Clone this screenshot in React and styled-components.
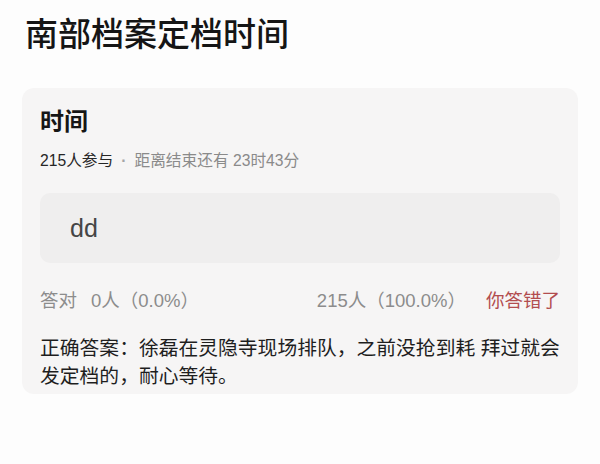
import styled, { createGlobalStyle } from "styled-components";

const GlobalStyle = createGlobalStyle`
  html, body {
    margin: 0;
    padding: 0;
    background: #fdfdfd;
  }
  body {
    font-family: "Liberation Sans", "Noto Sans CJK SC", sans-serif;
    color: #1c1c1c;
  }
`;

const Page = styled.div`
  width: 600px;
  height: 464px;
  padding: 11px 22px 0 22px;
  box-sizing: border-box;
`;

const Title = styled.h1`
  margin: 0 0 0 3px;
  font-family: "Noto Sans CJK SC", sans-serif;
  font-size: 33px;
  font-weight: 500;
  line-height: 42px;
  color: #151515;
`;

const Card = styled.section`
  margin-top: 35px;
  background: #f6f5f5;
  border-radius: 12px;
  padding: 15px 18px 4px 18px;
  display: flex;
  flex-direction: column;
`;

const CardTitle = styled.h2`
  margin: 0;
  font-family: "Noto Sans CJK SC", sans-serif;
  font-size: 24px;
  font-weight: 700;
  line-height: 34px;
  color: #161616;
`;

const Meta = styled.div`
  margin-top: 14px;
  font-size: 15.7px;
  line-height: 20px;
  color: #8a8a8a;
`;

const Strong = styled.span`
  color: #262626;
`;

const Dot = styled.span`
  margin: 0 8px;
  font-weight: 700;
  color: #a5a5a5;
`;

const Option = styled.div`
  margin-top: 22px;
  background: #efeeee;
  border-radius: 10px;
  height: 70px;
  display: flex;
  align-items: center;
  padding-left: 30px;
  font-size: 25px;
  color: #454545;
`;

const StatRow = styled.div`
  margin-top: 27px;
  display: flex;
  align-items: center;
  font-size: 18.5px;
  line-height: 22px;
  color: #8c8c8c;
`;

const Label = styled.span`
  margin-right: 14px;
`;

const Grow = styled.span`
  flex: 1;
`;

const Wrong = styled.span`
  margin-left: 20px;
  color: #b24d4f;
`;

const Answer = styled.p`
  margin: 22px 0 0 0;
  font-size: 19.8px;
  line-height: 28px;
  color: #1e1e1e;
`;

export default function App() {
  return (
    <>
      <GlobalStyle />
      <Page>
        <Title>南部档案定档时间</Title>
        <Card>
          <CardTitle>时间</CardTitle>
          <Meta>
            <Strong>215人参与</Strong>
            <Dot>·</Dot>距离结束还有 23时43分
          </Meta>
          <Option>dd</Option>
          <StatRow>
            <Label>答对</Label>
            <Grow>0人（0.0%）</Grow>
            <span>215人（100.0%）</span>
            <Wrong>你答错了</Wrong>
          </StatRow>
          <Answer>
            正确答案：徐磊在灵隐寺现场排队，之前没抢到耗 拜过就会
            <br />
            发定档的，耐心等待。
          </Answer>
        </Card>
      </Page>
    </>
  );
}
